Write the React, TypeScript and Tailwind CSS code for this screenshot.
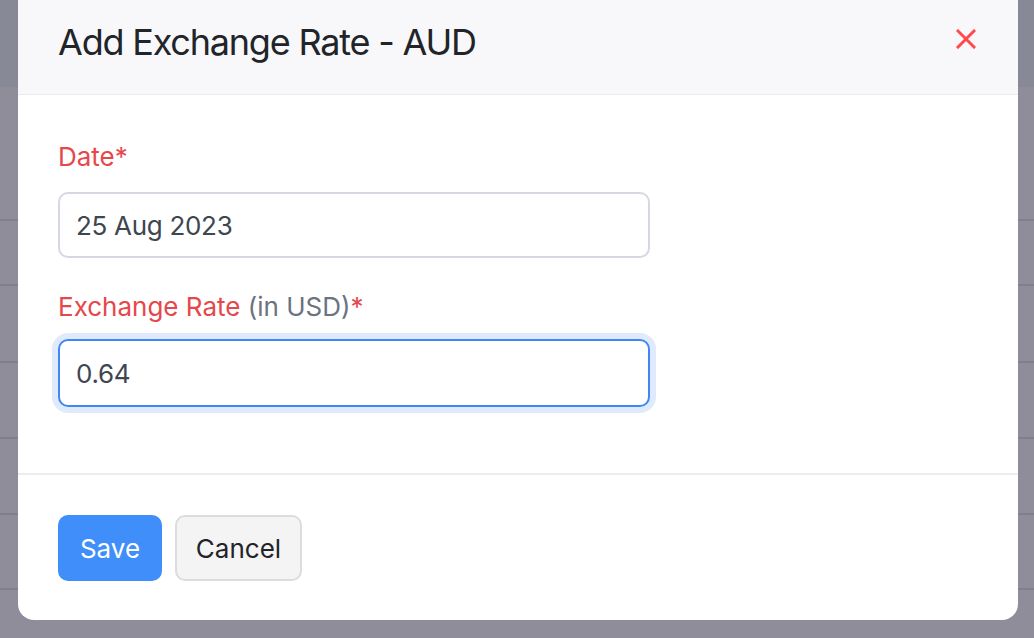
import { useState } from "react";

const rowHeights = [134, 65, 77, 76, 76, 75];

function Backdrop() {
  return (
    <div className="flex h-[638px] w-full flex-col bg-[#8e8d99]">
      <div className="h-[87px] shrink-0 bg-[#878a96]" />
      {rowHeights.map((h, i) => (
        <div key={i} className="shrink-0 border-b-2 border-[#817f8c]" style={{ height: h }} />
      ))}
    </div>
  );
}

function CloseIcon() {
  return (
    <svg aria-hidden="true" className="h-5 w-5" viewBox="0 0 20 20" fill="none">
      <path d="M2 2L18 18M18 2L2 18" stroke="#ff4a4d" strokeWidth="3" strokeLinecap="square" />
    </svg>
  );
}

export default function App() {
  const [date, setDate] = useState("25 Aug 2023");
  const [rate, setRate] = useState("0.64");

  return (
    <div className="relative h-[638px] w-[1034px] overflow-hidden font-['Inter',sans-serif]">
      <Backdrop />
      <div className="absolute left-[18px] top-0 w-[1000px] overflow-hidden rounded-b-[16px] bg-white">
        <div className="flex items-start justify-between border-b border-[#ebebef] bg-[#f8f8fb] pb-[34px] pl-[40px] pr-[42px] pt-[24px]">
          <h2 className="text-[36px] leading-[36px] font-normal tracking-[-1.2px] text-[#212428]">
            Add Exchange Rate - AUD
          </h2>
          <button type="button" className="mt-[5px]" aria-label="Close">
            <CloseIcon />
          </button>
        </div>

        <div className="flex flex-col px-[40px] pb-[66px] pt-[46px]">
          <label className="text-[26px] leading-[32px] text-[#e6474b]">Date*</label>
          <input
            className="mt-[19px] h-[66px] w-[592px] rounded-[10px] border-2 border-[#d7d7e2] bg-white px-[16px] text-[26px] tracking-[-0.3px] text-[#3e464f] outline-none"
            value={date}
            onChange={(e) => setDate(e.target.value)}
          />

          <label className="mt-[33px] text-[26px] leading-[32px] text-[#e6474b]">
            Exchange Rate <span className="text-[#6b7280]">(in USD)</span>*
          </label>
          <input
            className="mt-[16px] h-[68px] w-[592px] rounded-[10px] border-2 border-[#3f87f5] bg-white px-[16px] text-[26px] tracking-[-0.3px] text-[#3e464f] outline-none ring-[6px] ring-[#dfeafd]"
            value={rate}
            onChange={(e) => setRate(e.target.value)}
          />
        </div>

        <div className="flex gap-[13px] border-t-2 border-[#ececef] px-[40px] pb-[39px] pt-[40px]">
          <button
            type="button"
            className="h-[66px] w-[104px] rounded-[10px] bg-[#3f8ef9] text-[26px] text-white"
          >
            Save
          </button>
          <button
            type="button"
            className="h-[66px] w-[127px] rounded-[10px] border-2 border-[#dcdcdf] bg-[#f4f4f5] text-[26px] text-[#222428]"
          >
            Cancel
          </button>
        </div>
      </div>
    </div>
  );
}
